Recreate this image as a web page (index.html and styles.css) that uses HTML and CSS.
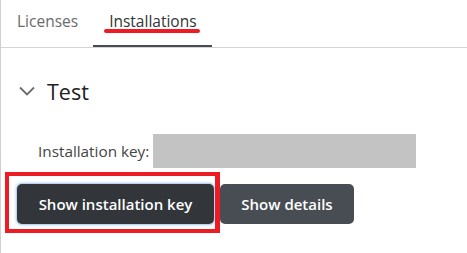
FILE: index.html
```html
<!DOCTYPE html>
<html lang="en">
<head>
  <meta charset="UTF-8">
  <meta name="viewport" content="width=device-width, initial-scale=1.0">
  <title>Installations</title>
  <link rel="stylesheet" href="styles.css">
</head>
<body>
  <div class="page">
    <nav class="tabs">
      <a class="tab">Licenses</a>
      <a class="tab active">Installations<span class="mark-line"></span></a>
    </nav>

    <section class="install">
      <div class="install-header">
        <svg class="chevron" width="16" height="10" viewBox="0 0 16 10">
          <path d="M1 1.5 L8 8.5 L15 1.5" fill="none" stroke="#6b6b6b" stroke-width="1.8"/>
        </svg>
        <span class="install-name">Test</span>
      </div>

      <div class="key-row">
        <span class="key-label">Installation key:</span>
        <span class="key-value"></span>
      </div>

      <div class="actions">
        <button type="button" class="btn btn-dark focused">Show installation key<span class="mark-box"></span></button>
        <button type="button" class="btn btn-secondary">Show details</button>
      </div>
    </section>
  </div>
</body>
</html>
```

FILE: styles.css
```css
body {
  margin: 0;
  font-family: "Open Sans", "Noto Sans", sans-serif;
  background-color: #fff;
  color: #333;
}

.page {
  width: 466px;
  height: 253px;
  border-left: 1px solid #cfcfcf;
}

.tabs {
  display: flex;
  height: 47px;
  border-bottom: 1px solid #d4d4d4;
}

.tab {
  position: relative;
  display: flex;
  align-items: center;
  padding: 0 15px 4px 16px;
  font-size: 15.5px;
  color: #6a6a6a;
  border-bottom: 2px solid transparent;
  box-sizing: border-box;
}

.tab.active {
  color: #333;
  border-bottom-color: #474c52;
}

.mark-line {
  position: absolute;
  left: 11px;
  right: 12px;
  top: 29px;
  height: 4px;
  border-radius: 2px;
  background-color: #ed1c24;
}

.install {
  padding: 0 0 0 17px;
}

.install-header {
  display: flex;
  align-items: center;
  height: 30px;
  margin-top: 28px;
}

.chevron {
  margin-left: 1px;
  margin-right: 12px;
}

.install-name {
  font-size: 21.5px;
  color: #222;
}

.key-row {
  display: flex;
  align-items: center;
  margin-top: 28px;
  padding-left: 20px;
}

.key-label {
  font-size: 15.3px;
  color: #444;
  width: 115px;
  white-space: nowrap;
}

.key-value {
  display: block;
  width: 263px;
  height: 34px;
  background-color: #c3c3c3;
}

.actions {
  display: flex;
  gap: 6px;
  margin-top: 16px;
  margin-left: -1px;
}

.btn {
  position: relative;
  height: 40px;
  border: none;
  border-radius: 5px;
  font-family: "Open Sans", "Noto Sans", sans-serif;
  font-size: 15px;
  font-weight: 600;
  color: #fff;
  cursor: pointer;
}

.btn-dark {
  width: 197px;
  background-color: #32353a;
}

.btn-dark.focused {
  box-shadow: 0 0 0 1px #b9d4f0, 0 0 2px 2px #d6e6f7;
}

.btn-secondary {
  width: 134px;
  background-color: #484d54;
}

.mark-box {
  position: absolute;
  left: -12px;
  top: -12px;
  width: 215px;
  height: 61px;
  border: 4px solid #ed1c24;
  box-sizing: border-box;
  border-right-width: 5px;
}
```
